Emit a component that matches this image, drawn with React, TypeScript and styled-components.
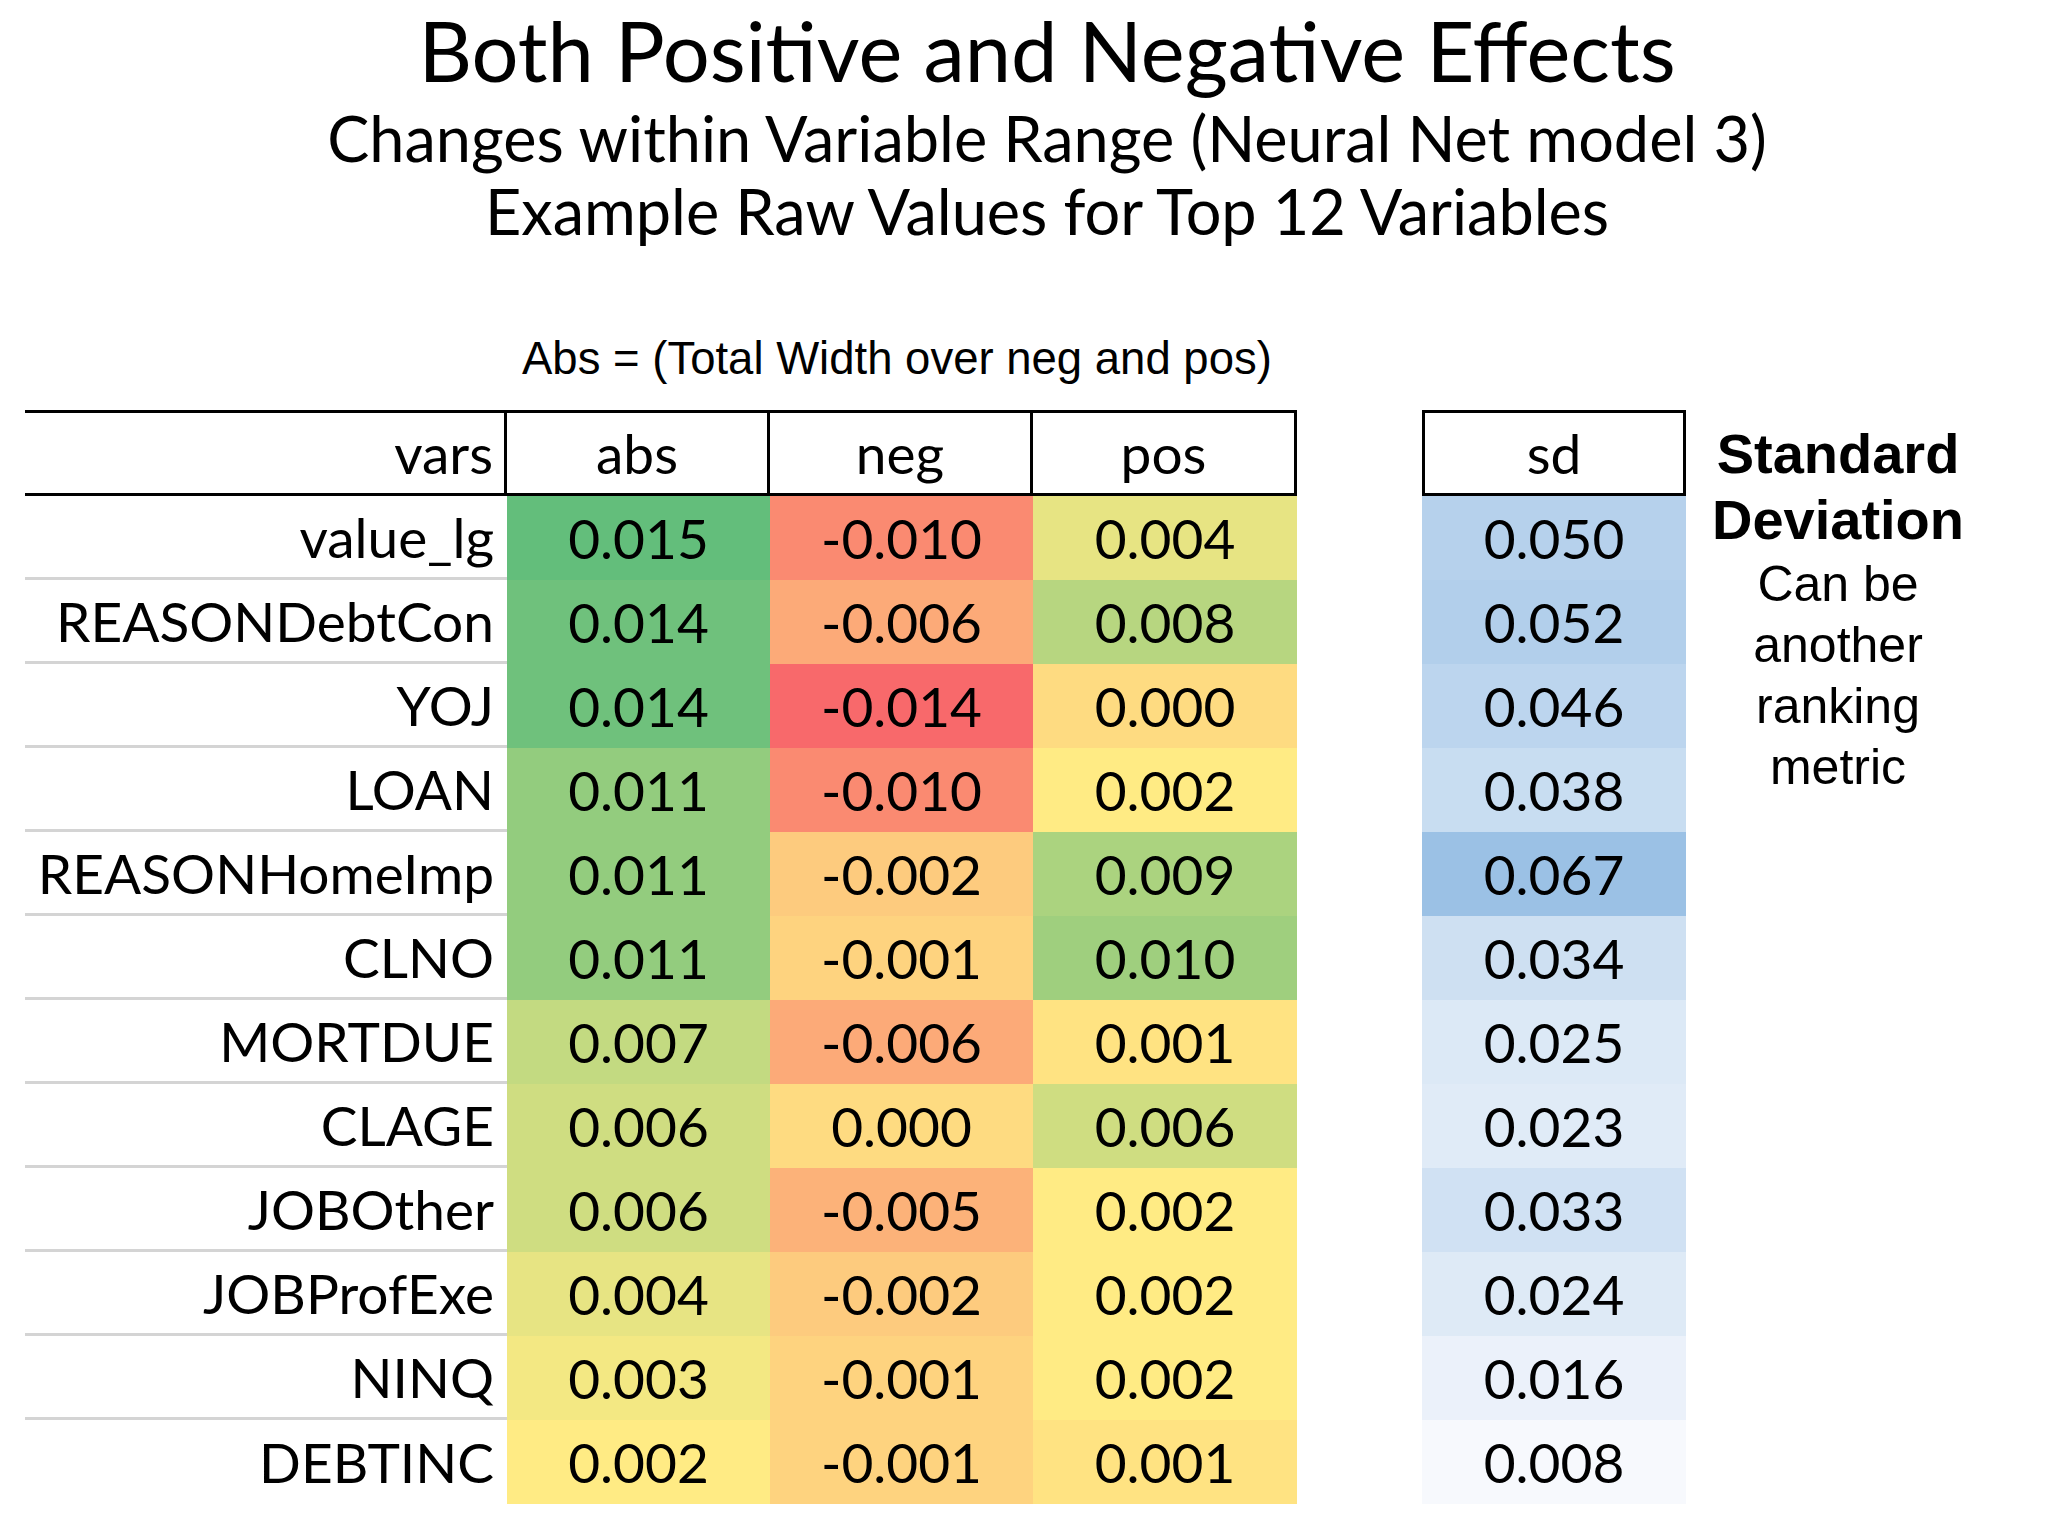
import React from 'react';
import styled, { createGlobalStyle } from 'styled-components';

const GlobalStyle = createGlobalStyle`
  html, body { margin: 0; padding: 0; background: #ffffff; }
  body { width: 2048px; height: 1536px; overflow: hidden; }
`;

const Page = styled.div`
  width: 2048px;
  height: 1536px;
  box-sizing: border-box;
  background: #ffffff;
  color: #000000;
  display: flex;
  flex-direction: column;
`;

const Heading = styled.header`
  display: flex;
  flex-direction: column;
  align-items: center;
  padding-left: 46px;
  font-family: Lato, "Open Sans", sans-serif;
  white-space: nowrap;
`;

const Title = styled.h1`
  margin: 0;
  font-weight: 400;
  font-size: 83px;
  line-height: 100px;
`;

const Subtitle = styled.h2<{ $first?: boolean }>`
  margin: ${(p) => (p.$first ? '1px' : '0')} 0 0;
  font-weight: 400;
  font-size: 63px;
  line-height: 73px;
`;

const Body = styled.main`
  display: flex;
  align-items: flex-start;
  margin-top: 86px;
  padding-left: 25px;
`;

const LeftGroup = styled.section`
  display: flex;
  flex-direction: column;
`;

const Caption = styled.div`
  font-family: "Liberation Sans", Arial, sans-serif;
  font-size: 45.5px;
  line-height: 52px;
  padding-left: 497px;
  margin-bottom: 25px;
  white-space: nowrap;
`;

const Table = styled.div`
  display: grid;
  grid-template-columns: 482px 263px 263px 264px;
  font-family: Lato, "Open Sans", sans-serif;
  font-size: 55px;
`;

const HeadCell = styled.div<{ $align: 'right' | 'center' }>`
  box-sizing: border-box;
  height: 86px;
  border-top: 3px solid #000;
  border-bottom: 3px solid #000;
  border-right: 3px solid #000;
  display: flex;
  align-items: center;
  justify-content: ${(p) => (p.$align === 'right' ? 'flex-end' : 'center')};
  padding-right: ${(p) => (p.$align === 'right' ? '11px' : '0')};
  white-space: nowrap;
`;

const VarCell = styled.div<{ $last?: boolean }>`
  box-sizing: border-box;
  height: 84px;
  display: flex;
  align-items: center;
  justify-content: flex-end;
  padding-right: 13px;
  border-bottom: ${(p) => (p.$last ? 'none' : '3px solid #d4d4d4')};
  white-space: nowrap;
`;

const ValueCell = styled.div<{ $bg: string }>`
  box-sizing: border-box;
  height: 84px;
  display: flex;
  align-items: center;
  justify-content: center;
  background: ${(p) => p.$bg};
  white-space: nowrap;
`;

const SdGroup = styled.section`
  display: flex;
  flex-direction: column;
  width: 264px;
  margin-left: 125px;
  padding-top: 77px;
  font-family: Lato, "Open Sans", sans-serif;
  font-size: 55px;
`;

const SdHead = styled.div`
  box-sizing: border-box;
  height: 86px;
  border: 3px solid #000;
  display: flex;
  align-items: center;
  justify-content: center;
`;

const Note = styled.aside`
  width: 276px;
  margin-left: 14px;
  padding-top: 88px;
  display: flex;
  flex-direction: column;
  align-items: center;
  text-align: center;
  font-family: "Liberation Sans", Arial, sans-serif;
  white-space: nowrap;
`;

const NoteTitle = styled.div`
  font-weight: 700;
  font-size: 56px;
  line-height: 66px;
`;

const NoteText = styled.div`
  margin-top: 1px;
  font-size: 50px;
  line-height: 61px;
`;

type Row = { name: string; abs: number; neg: number; pos: number; sd: number };

const rows: Row[] = [
  { name: 'value_lg', abs: 0.015, neg: -0.01, pos: 0.004, sd: 0.05 },
  { name: 'REASONDebtCon', abs: 0.014, neg: -0.006, pos: 0.008, sd: 0.052 },
  { name: 'YOJ', abs: 0.014, neg: -0.014, pos: 0.0, sd: 0.046 },
  { name: 'LOAN', abs: 0.011, neg: -0.01, pos: 0.002, sd: 0.038 },
  { name: 'REASONHomeImp', abs: 0.011, neg: -0.002, pos: 0.009, sd: 0.067 },
  { name: 'CLNO', abs: 0.011, neg: -0.001, pos: 0.01, sd: 0.034 },
  { name: 'MORTDUE', abs: 0.007, neg: -0.006, pos: 0.001, sd: 0.025 },
  { name: 'CLAGE', abs: 0.006, neg: 0.0, pos: 0.006, sd: 0.023 },
  { name: 'JOBOther', abs: 0.006, neg: -0.005, pos: 0.002, sd: 0.033 },
  { name: 'JOBProfExe', abs: 0.004, neg: -0.002, pos: 0.002, sd: 0.024 },
  { name: 'NINQ', abs: 0.003, neg: -0.001, pos: 0.002, sd: 0.016 },
  { name: 'DEBTINC', abs: 0.002, neg: -0.001, pos: 0.001, sd: 0.008 },
];

type RGB = [number, number, number];
const RED: RGB = [248, 105, 107];
const YEL: RGB = [255, 235, 132];
const GRN: RGB = [99, 190, 123];
const SD_LO: RGB = [247, 249, 253];
const SD_HI: RGB = [155, 193, 229];

const mix = (a: RGB, b: RGB, t: number) => {
  const k = Math.max(0, Math.min(1, t));
  const c = a.map((v, i) => Math.round(v + (b[i] - v) * k));
  return `rgb(${c[0]}, ${c[1]}, ${c[2]})`;
};

const MIN = -0.014;
const MID = 0.002;
const MAX = 0.015;
const heat = (v: number) =>
  v <= MID ? mix(RED, YEL, (v - MIN) / (MID - MIN)) : mix(YEL, GRN, (v - MID) / (MAX - MID));
const sdHeat = (v: number) => mix(SD_LO, SD_HI, (v - 0.008) / (0.067 - 0.008));

const fmt = (v: number) => (v < 0 ? '-' : '') + Math.abs(v).toFixed(3);

export default function App() {
  return (
    <Page>
      <GlobalStyle />
      <Heading>
        <Title>Both Positive and Negative Effects</Title>
        <Subtitle $first>Changes within Variable Range (Neural Net model 3)</Subtitle>
        <Subtitle>Example Raw Values for Top 12 Variables</Subtitle>
      </Heading>
      <Body>
        <LeftGroup>
          <Caption>Abs = (Total Width over neg and pos)</Caption>
          <Table>
            <HeadCell $align="right">vars</HeadCell>
            <HeadCell $align="center">abs</HeadCell>
            <HeadCell $align="center">neg</HeadCell>
            <HeadCell $align="center">pos</HeadCell>
            {rows.map((r, i) => (
              <React.Fragment key={r.name}>
                <VarCell $last={i === rows.length - 1}>{r.name}</VarCell>
                <ValueCell $bg={heat(r.abs)}>{fmt(r.abs)}</ValueCell>
                <ValueCell $bg={heat(r.neg)}>{fmt(r.neg)}</ValueCell>
                <ValueCell $bg={heat(r.pos)}>{fmt(r.pos)}</ValueCell>
              </React.Fragment>
            ))}
          </Table>
        </LeftGroup>
        <SdGroup>
          <SdHead>sd</SdHead>
          {rows.map((r) => (
            <ValueCell key={r.name} $bg={sdHeat(r.sd)}>
              {fmt(r.sd)}
            </ValueCell>
          ))}
        </SdGroup>
        <Note>
          <NoteTitle>
            Standard
            <br />
            Deviation
          </NoteTitle>
          <NoteText>
            Can be
            <br />
            another
            <br />
            ranking
            <br />
            metric
          </NoteText>
        </Note>
      </Body>
    </Page>
  );
}
